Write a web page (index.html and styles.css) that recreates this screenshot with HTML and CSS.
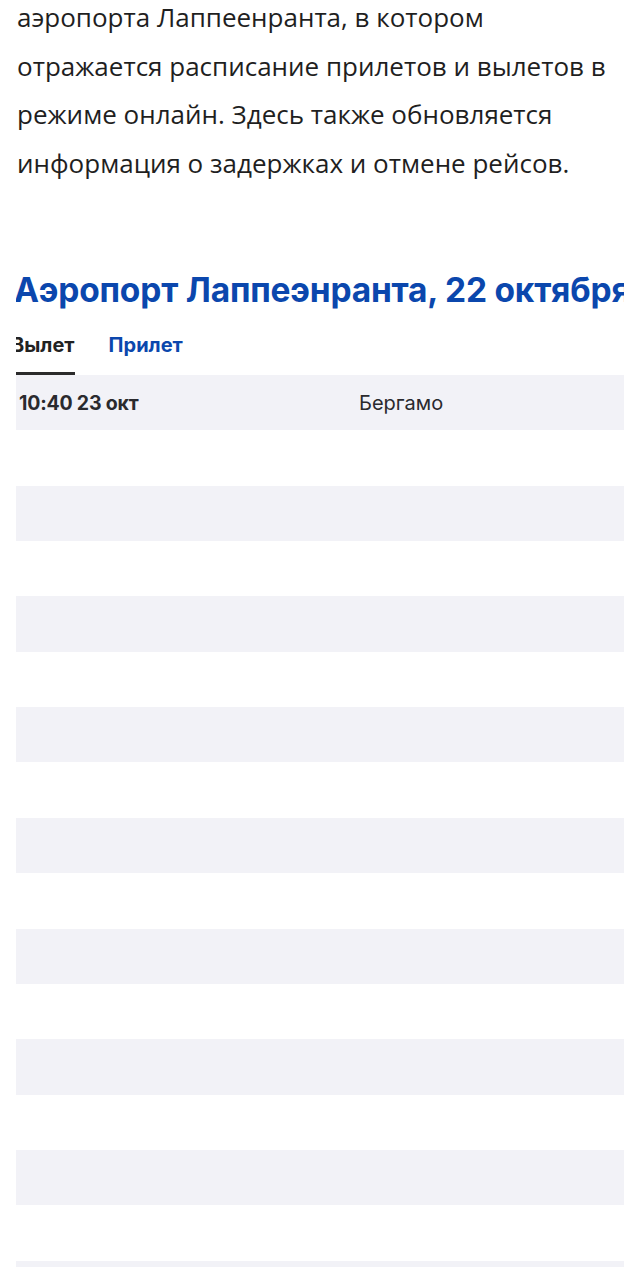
FILE: index.html
```html
<!DOCTYPE html>
<html lang="ru">
<head>
    <meta charset="UTF-8">
    <meta name="viewport" content="width=device-width, initial-scale=1.0">
    <title>Аэропорт Лаппеэнранта</title>
    <link rel="stylesheet" href="styles.css">
</head>
<body>
    <p class="intro">
        аэропорта Лаппеенранта, в котором
        отражается расписание прилетов и вылетов в
        режиме онлайн. Здесь также обновляется
        информация о задержках и отмене рейсов.
    </p>

    <div class="board">
        <h2 class="board-title">Аэропорт Лаппеэнранта, 22 октября</h2>

        <div class="tabs">
            <span class="tab tab-active">Вылет</span>
            <span class="tab">Прилет</span>
        </div>

        <div class="rows">
            <div class="row">
                <span class="time">10:40 23 окт</span>
                <span class="city">Бергамо</span>
            </div>
            <div class="row"></div>
            <div class="row"></div>
            <div class="row"></div>
            <div class="row"></div>
            <div class="row"></div>
            <div class="row"></div>
            <div class="row"></div>
            <div class="row"></div>
            <div class="row"></div>
            <div class="row"></div>
            <div class="row"></div>
            <div class="row"></div>
            <div class="row"></div>
            <div class="row"></div>
            <div class="row"></div>
            <div class="row"></div>
            <div class="row"></div>
            <div class="row"></div>
        </div>
    </div>
</body>
</html>
```

FILE: styles.css
```css
body {
    margin: 0;
    background: #ffffff;
    color: #1f1f1f;
    overflow: hidden;
    height: 1267px;
}

.intro {
    font-family: 'Open Sans', sans-serif;
    font-size: 26px;
    line-height: 48.7px;
    margin: -7px 0 0;
    padding: 0 16px 0 17px;
}

.board {
    margin: 80px 16px 0;
    overflow: hidden;
    font-family: Inter, sans-serif;
}

.board-title {
    margin: 0 0 0 -2px;
    font-size: 33.5px;
    line-height: 44px;
    font-weight: 700;
    letter-spacing: -0.2px;
    color: #0b47ad;
    white-space: nowrap;
}

.tabs {
    display: flex;
    gap: 34px;
    margin: 15px 0 0 -5px;
}

.tab {
    font-size: 20px;
    line-height: 24px;
    font-weight: 700;
    color: #0b47ad;
    padding: 6px 0 15px;
}

.tab-active {
    color: #222222;
    border-bottom: 3px solid #2b2b2b;
}

.rows {
    display: flex;
    flex-direction: column;
}

.row {
    flex: none;
    height: 55.375px;
    display: flex;
    align-items: center;
    font-size: 20px;
    color: #2a2a2e;
}

.row:nth-child(odd) {
    background: #f2f2f7;
}

.time {
    width: 340px;
    padding-left: 3px;
    font-weight: 700;
    font-size: 19.5px;
    letter-spacing: -0.2px;
}

.city {
    font-weight: 400;
}
```
